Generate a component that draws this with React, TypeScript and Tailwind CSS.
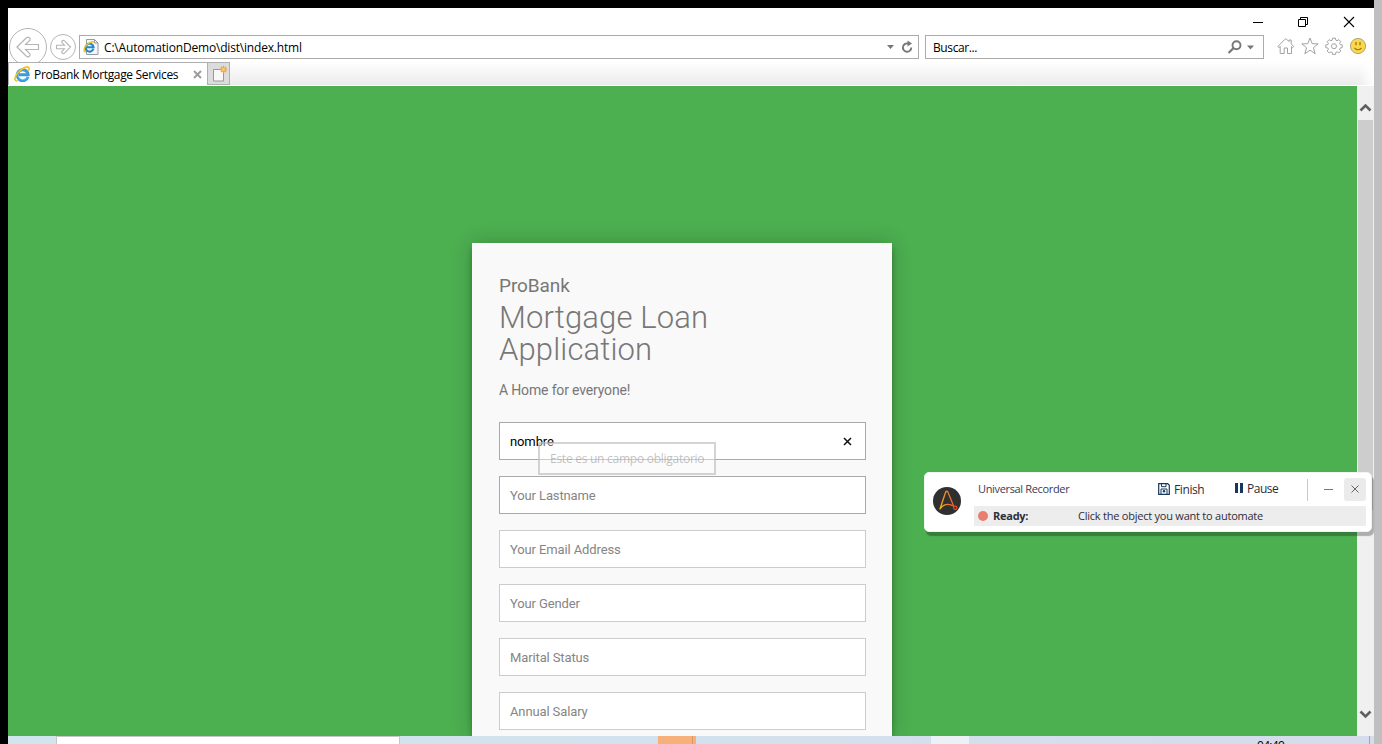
import React from "react";

const ui = "font-['Open_Sans','Noto_Sans',sans-serif]";

function IeLogo({ className }: { className: string }) {
  return (
    <svg viewBox="0 0 16 16" className={className} fill="none">
      <path d="M14 10.800A5.500 5.500 0 1 1 14.200 8.700H5" stroke="#3a9cdb" strokeWidth="2.900" />
      <path d="M13 11.200A4.900 4.900 0 0 1 4 9.500" stroke="#8bd3f5" strokeWidth="0.800" />
      <path d="M3.600 15C-.4 15.400.2 10 5 5.300 9.200 1.400 14.300-.2 15 1.900c.2.800 0 1.700-.5 2.700" stroke="#f6c21f" strokeWidth="1.700" />
    </svg>
  );
}

function TitleBar() {
  return (
    <div className="flex h-[27px] shrink-0 items-start justify-end gap-[34px] pr-[19px] pt-[8px]">
      <svg className="h-3 w-3" viewBox="0 0 12 12"><path d="M2 6.500h10" stroke="#000" /></svg>
      <svg className="h-3 w-3" viewBox="0 0 12 12" fill="none" stroke="#000">
        <path d="M1.500 3.500h7v7h-7zM3.500 3.500v-2h7v7h-2" />
      </svg>
      <svg className="h-3 w-3" viewBox="0 0 12 12"><path d="M1 1l10 10M11 1L1 11" stroke="#000" strokeWidth="1.100" /></svg>
    </div>
  );
}

function NavRow() {
  return (
    <div className="flex h-[27px] shrink-0 items-start">
      <svg className="-mt-[7px] h-[34px] w-[71px] shrink-0" viewBox="0 0 71 34" fill="none" stroke="#b5b5b5">
        <circle cx="20" cy="19" r="18.500" />
        <path strokeWidth="1.200" d="M9 19l9.400-9.300c1.600-1.300 4.600.3 3.500 2.400L17.600 16.500H30.500v5H17.600l4.300 4.400c1.100 2.100-1.900 3.700-3.500 2.400z" />
        <circle cx="55" cy="19" r="12.500" />
        <path strokeWidth="1.100" d="M62.500 19l-6.200-6.300c-1.200-.9-3.100.4-2.500 1.800l2.600 2.700H48.500v3.600h7.900l-2.600 2.700c-.6 1.400 1.300 2.700 2.500 1.800z" />
      </svg>
      <div className="flex h-6 w-[840px] items-center border border-[#ababab] bg-white pl-[3px] pr-[3px]">
        <svg className="h-[18px] w-[17px] shrink-0" viewBox="0 0 17 18">
          <path d="M3.500 1.500h8l3.500 3.500v11.500H3.500z" fill="#f5f6f7" stroke="#9a9a9a" />
          <path d="M11.500 1.500v3.500H15" fill="none" stroke="#9a9a9a" />
          <g transform="translate(.3 3) scale(.72)" fill="none">
            <path d="M14 10.800A5.500 5.500 0 1 1 14.200 8.700H5" stroke="#2288cf" strokeWidth="3" />
            <path d="M3.600 15C-.4 15.400.2 10 5 5.300 9.200 1.400 14.300-.2 15 1.900" stroke="#f3c01c" strokeWidth="2" />
          </g>
        </svg>
        <span className="ml-[4px] mt-px whitespace-nowrap text-[12px] leading-4 text-black tracking-[-0.18px]">C:\AutomationDemo\dist\index.html</span>
        <svg className="ml-auto h-4 w-8" viewBox="0 0 32 16">
          <path d="M4 6h7L7.500 10z" fill="#777" />
          <path d="M25.500 4.600A4.200 4.200 0 1 0 28.300 8.500" fill="none" stroke="#777" strokeWidth="1.900" />
          <path d="M24.500 1.500l4.500 3-4.500 3z" fill="#777" />
        </svg>
      </div>
      <div className="ml-[6px] flex h-6 w-[339px] items-center border border-[#ababab] bg-white pl-[7px] pr-[9px]">
        <span className="mt-px text-[12px] leading-4 text-black tracking-[-0.4px]">Buscar...</span>
        <svg className="ml-auto h-4 w-[27px]" viewBox="0 0 27 16">
          <circle cx="9.500" cy="6.200" r="4" fill="none" stroke="#777" strokeWidth="1.900" />
          <path d="M6.600 9L1.600 14" stroke="#777" strokeWidth="2.200" />
          <path d="M20 6.500h7L23.500 10.500z" fill="#777" />
        </svg>
      </div>
      <div className="ml-[13px] flex items-center gap-[6px] pt-[2px]">
        <svg className="h-[18px] w-[18px]" viewBox="0 0 18 18" fill="none" stroke="#a2a2a2">
          <path d="M.8 9.500L8 2.200q.8-.8 1.600 0l2.400 2.400V3h2.200v3.800l2.600 2.700-1.100 1.100-1.200-1.100v7h-4v-5.500H7.200v5.500h-4v-7L2 10.600z" />
        </svg>
        <svg className="h-[18px] w-[18px]" viewBox="0 0 18 18" fill="none" stroke="#a2a2a2">
          <path d="M9 1l2.200 5.700 6 .2-4.800 3.800 1.800 6L9 13.200l-5.200 3.500 1.800-6L.8 6.900l6-.2z" />
        </svg>
        <svg className="h-[18px] w-[18px]" viewBox="0 0 18 18" fill="none" stroke="#a2a2a2">
          <path d="M7.500 1.200h3l.3 2 1.300.6 1.700-1.200 2 2-1.200 1.700.6 1.300 2 .3v2.700l-2 .4-.6 1.300 1.200 1.700-2 2-1.700-1.200-1.300.6-.3 2h-3l-.3-2-1.300-.6L4.200 16l-2-2 1.200-1.700-.6-1.300-2-.4V7.900l2-.3.6-1.300-1.200-1.700 2-2 1.700 1.200 1.300-.6z" />
          <circle cx="9" cy="9.200" r="2.500" />
        </svg>
        <svg className="h-[18px] w-[18px]" viewBox="0 0 18 18">
          <circle cx="9" cy="9" r="7.600" fill="#fbd84b" stroke="#a99a72" strokeWidth=".9" />
          <path d="M7 5v3.300M11 5v3.300" stroke="#9a7415" strokeWidth="1.300" />
          <path d="M5.500 11q3.500 3.600 7 0" fill="none" stroke="#9a7415" strokeWidth="1.100" />
        </svg>
      </div>
    </div>
  );
}

function TabRow() {
  return (
    <div className="flex h-[24px] shrink-0 border-b border-white">
      <div className="flex w-[200px] items-center border border-b-0 border-[#b0b0b0] bg-white pl-[5px] pr-[5px]">
        <IeLogo className="h-4 w-4" />
        <span className="ml-[4px] mt-px whitespace-nowrap text-[12px] leading-4 text-black tracking-[-0.34px]">ProBank Mortgage Services</span>
        <svg className="ml-auto h-[9px] w-[9px]" viewBox="0 0 9 9"><path d="M1 1l7 7M8 1L1 8" stroke="#9b9b9b" strokeWidth="1.900" /></svg>
      </div>
      <div className="-ml-px flex w-[23px] items-center justify-center border border-[#b0b0b0] bg-[#dcdcdc]">
        <svg className="h-[18px] w-[18px]" viewBox="0 0 18 18">
          <path d="M3.500 4.500h10v11.500h-10z" fill="#f8f8f8" stroke="#999" />
          <path d="M13.500 .8v7.400M9.800 4.500h7.400M11 2l5 5M16 2l-5 5" stroke="#f2a322" strokeWidth="1.300" />
          <circle cx="13.500" cy="4.500" r="1.400" fill="#ffd06a" />
        </svg>
      </div>
      <div className="flex flex-1 bg-linear-to-b from-white to-[#ebebeb]">
        <div className="ml-auto w-[16px] bg-linear-to-r from-transparent to-white" />
      </div>
    </div>
  );
}

const fields = [
  { label: "Your Email Address" },
  { label: "Your Gender" },
  { label: "Marital Status" },
  { label: "Annual Salary" },
];

const inputBase = "flex h-[38px] shrink-0 items-center border bg-white px-[10px] pt-px text-[13px] tracking-[-0.12px]";

function LoanForm() {
  return (
    <div className="flex h-[493px] w-[420px] flex-col bg-[#f9f9f9] pl-[27px] pr-[26px] pt-[32px] font-[Roboto,sans-serif] text-[#777] shadow-[0_0_20px_0_rgba(0,0,0,0.2),0_5px_5px_0_rgba(0,0,0,0.24)]">
      <h4 className="h-[22px] text-[19px] leading-[22px] tracking-[-0.1px]">ProBank</h4>
      <h1 className="mt-[5px] text-[31px] font-light leading-8 tracking-[0.14px]">Mortgage Loan<br />Application</h1>
      <p className="mt-[15px] h-[18px] text-[14px] leading-[18px] tracking-[-0.16px]">A Home for everyone!</p>
      <div className="mt-[23px] flex flex-col gap-4">
        <div className={`${inputBase} relative border-[#a9a9a9] text-black`}>
          nombre
          <svg className="-mt-px ml-auto mr-[3px] h-[9px] w-[9px]" viewBox="0 0 9 9"><path d="M1 1l7 7M8 1L1 8" stroke="#111" strokeWidth="1.500" /></svg>
          <div className={`absolute left-[38px] top-[19px] z-10 flex h-[33px] w-[178px] items-center border-2 border-[#aaa]/50 bg-white/40 pl-[10px] pt-px text-[12px] text-[#999]/60 ${ui}`}>
            <span className="whitespace-nowrap tracking-[-0.26px]">Este es un campo obligatorio</span>
          </div>
        </div>
        <div className={`${inputBase} border-[#a9a9a9] text-[#858585]`}>Your Lastname</div>
        {fields.map((f) => (
          <div key={f.label} className={`${inputBase} border-[#ccc] text-[#858585]`}>{f.label}</div>
        ))}
      </div>
    </div>
  );
}

function Scrollbar() {
  return (
    <div className="flex w-[17px] shrink-0 flex-col items-center bg-[#f0f0f0]">
      <svg className="mt-[16px] h-[10px] w-[13px] shrink-0" viewBox="0 0 13 10"><path d="M1.500 8.500l5-5 5 5" fill="none" stroke="#606060" strokeWidth="2.600" /></svg>
      <div className="mt-[8px] h-[390px] w-[15px] shrink-0 bg-[#cdcdcd]" />
      <svg className="mb-[16px] mt-auto h-[10px] w-[13px] shrink-0" viewBox="0 0 13 10"><path d="M1.500 1.500l5 5 5-5" fill="none" stroke="#606060" strokeWidth="2.600" /></svg>
    </div>
  );
}

function Taskbar() {
  return (
    <div className="flex h-2 shrink-0 bg-linear-to-r from-[#cfe6ee] to-[#d6dcec]">
      <div className="ml-[48px] h-2 w-[344px] border border-b-0 border-[#c6c6c6] bg-white" />
      <div className="ml-[258px] flex h-2 w-[38px] justify-end bg-[#f7b07a]">
        <div className="mr-[3px] w-px bg-[#d99a69]" />
      </div>
      <div className="ml-[235px] h-2 w-[38px] bg-[#ecf1f8]" />
      <div className={`ml-[288px] h-2 w-[30px] overflow-hidden text-[12px] text-black ${ui}`}>
        <div className="mt-[3px] leading-[14px] tracking-[-0.7px]">04:49</div>
      </div>
      <div className="ml-auto mr-[4px] w-px bg-[#9ba5b8]" />
    </div>
  );
}

function Recorder() {
  return (
    <div className={`absolute left-[924px] top-[472px] flex h-[60px] w-[448px] rounded-[5px] border border-[#eef5ee] bg-white pl-[8px] pr-[5px] text-[11px] text-[#2d2d3a] shadow-[2px_4px_1px_rgba(0,0,0,0.28)] ${ui}`}>
      <svg className="mt-[14px] h-7 w-7 shrink-0" viewBox="0 0 28 28" fill="none">
        <defs>
          <linearGradient id="mark" x1="6" y1="0" x2="24" y2="0" gradientUnits="userSpaceOnUse">
            <stop stopColor="#f7b51b" /><stop offset=".55" stopColor="#e8792b" /><stop offset="1" stopColor="#e8502b" />
          </linearGradient>
        </defs>
        <circle cx="14" cy="14" r="14" fill="#303030" />
        <path d="M7 22L12.600 5.300c.5-1.400 1.900-1.400 2.400 0L20.400 18.600M7 22c2.500-4.500 8-6.200 14-2.800" stroke="url(#mark)" strokeWidth="1.300" strokeLinecap="round" />
        <circle cx="22.300" cy="20.800" r="1.700" stroke="#e8502b" strokeWidth="1.100" />
      </svg>
      <div className="ml-[13px] flex flex-1 flex-col">
        <div className="flex h-[33px] items-center">
          <span className="ml-[4px] w-[180px] whitespace-nowrap text-[11px] text-[#353b57] tracking-[-0.34px]">Universal Recorder</span>
          <svg className="-mt-px h-3 w-3" viewBox="0 0 12 12" fill="none" stroke="#17375e" strokeWidth="1.200">
            <path d="M.7.700h9l1.600 1.600v9H.7z" /><path d="M3.500 1v2.700h4.500V1M3 11V6h6v5" strokeWidth="1" /><circle cx="6" cy="8.300" r="1.200" fill="#17375e" stroke="none" />
          </svg>
          <span className="ml-[4px] w-[61px] text-[12px] tracking-[-0.4px]">Finish</span>
          <svg className="-mt-[3px] h-[10px] w-[8px]" viewBox="0 0 8 10"><path d="M0 0h3v10H0zM5 0h3v10H5z" fill="#17375e" /></svg>
          <span className="-mt-px ml-[4px] w-[60px] text-[12px] tracking-[-0.5px]">Pause</span>
          <div className="h-[22px] w-px bg-[#c9c9c9]" />
          <div className="ml-[16px] h-px w-[9px] bg-[#777]" />
          <div className="ml-auto flex h-[23px] w-[22px] items-center justify-center rounded-[3px] bg-[#ebebeb]">
            <svg className="-ml-px -mt-[2px] h-2 w-2" viewBox="0 0 8 8"><path d="M.5.500l7 7M7.500.500l-7 7" stroke="#666" /></svg>
          </div>
        </div>
        <div className="flex h-[20px] items-center bg-[#ededed] pl-[4px]">
          <div className="h-[10px] w-[10px] rounded-full bg-[#e87e6e]" />
          <span className="ml-[5px] w-[85px] font-bold tracking-[-0.25px]">Ready:</span>
          <span className="whitespace-nowrap tracking-[-0.23px]">Click the object you want to automate</span>
        </div>
      </div>
    </div>
  );
}

export default function App() {
  return (
    <div className={`relative flex h-[744px] w-[1382px] overflow-hidden bg-black ${ui}`}>
      <div className="ml-2 mt-2 flex w-[1366px] shrink-0 flex-col bg-white">
        <TitleBar />
        <NavRow />
        <TabRow />
        <div className="flex h-[650px] shrink-0">
          <div className="flex flex-1 items-end overflow-hidden bg-[#4caf50] pl-[464px]">
            <LoanForm />
          </div>
          <Scrollbar />
        </div>
        <Taskbar />
      </div>
      <div className="w-2 shrink-0 bg-[#bfbfbf]" />
      <Recorder />
    </div>
  );
}
